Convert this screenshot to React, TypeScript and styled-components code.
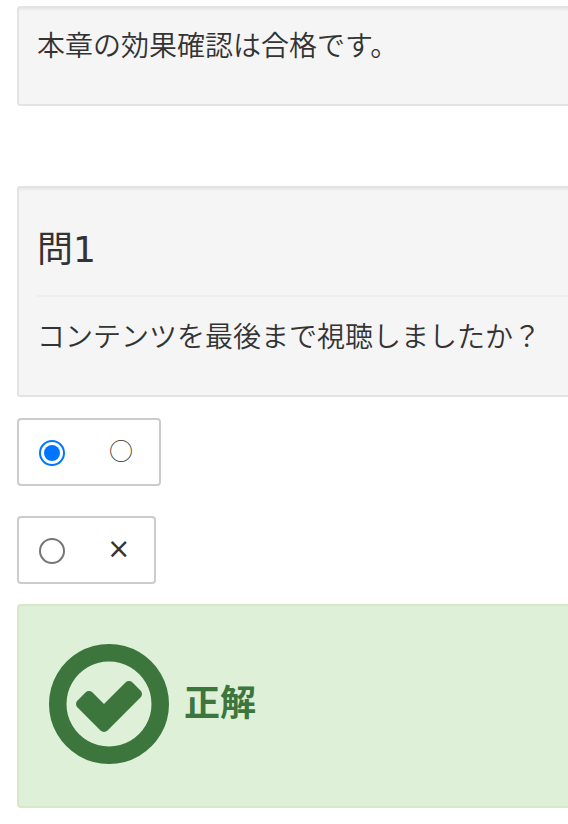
import React from "react";
import styled, { createGlobalStyle } from "styled-components";

const Global = createGlobalStyle`
  * { box-sizing: border-box; }
  body {
    margin: 0;
    background: #fff;
    color: #333;
    font-family: "Noto Sans CJK JP", sans-serif;
    font-size: 28px;
    line-height: 40px;
  }
`;
const Page = styled.main`
  display: flex;
  flex-direction: column;
  padding: 6px 0 16px 17px;
`;
const Well = styled.section<{ $gap: number }>`
  margin-bottom: ${(p) => p.$gap}px;
  padding: 16px 0 40px 18px;
  border: 2px solid #e3e3e3;
  border-right: 0;
  border-radius: 3px 0 0 3px;
  background: #f5f5f5;
  box-shadow: inset 0 3px 2px -1px rgba(0, 0, 0, 0.05);
`;
const Paragraph = styled.p`
  margin: 0;
  font-weight: 350;
`;
const Heading = styled.h1`
  margin: 24px 0 18px;
  padding-bottom: 23px;
  border-bottom: 2px solid #eee;
  font-family: "DejaVu Sans", "Noto Sans CJK JP", sans-serif;
  font-size: 36px;
  font-weight: 400;
  line-height: 44px;
`;
const Choices = styled.fieldset`
  display: flex;
  flex-direction: column;
  align-items: flex-start;
  gap: 30px;
  min-width: 0;
  margin: 0 0 20px;
  padding: 0;
  border: 0;
`;
const Choice = styled.label`
  display: flex;
  align-items: center;
  gap: 42px;
  height: 68px;
  padding: 0 24px 0 20px;
  border: 2px solid #ccc;
  border-radius: 4px;
`;
const Radio = styled.input`
  appearance: none;
  width: 26px;
  height: 26px;
  margin: 2px 0 0;
  padding: 3px;
  border: 2px solid #767676;
  border-radius: 50%;
  background: #fff;

  &:checked {
    border-color: #0075ff;
  }
  &:checked::before {
    content: "";
    display: block;
    height: 100%;
    border-radius: 50%;
    background: #0075ff;
  }
`;
const Mark = styled.span<{ $round?: boolean }>`
  width: ${(p) => (p.$round ? 28 : 23)}px;
  padding-bottom: ${(p) => (p.$round ? 4 : 2)}px;
  font-family: ${(p) => (p.$round ? '"Noto Sans CJK JP"' : '"DejaVu Sans"')}, sans-serif;
  font-size: ${(p) => (p.$round ? 24 : 28)}px;
  font-weight: ${(p) => (p.$round ? 300 : 400)};
  text-align: center;
`;
const Result = styled.section`
  display: flex;
  align-items: center;
  gap: 15px;
  padding: 38px 30px 42px;
  border: 2px solid #d6e9c6;
  border-right: 0;
  border-radius: 4px 0 0 4px;
  background: #dff0d8;
  color: #3c763d;
`;
const Verdict = styled.strong`
  padding-bottom: 8px;
  font-size: 36px;
  font-weight: 700;
`;
const CheckIcon = styled.svg`
  flex: none;
  width: 120px;
  height: 120px;
  fill: currentColor;
`;

export default function App() {
  return (
    <>
      <Global />
      <Page lang="ja">
        <Well $gap={80}>
          <Paragraph>本章の効果確認は合格です。</Paragraph>
        </Well>
        <Well $gap={21}>
          <Heading>問1</Heading>
          <Paragraph>コンテンツを最後まで視聴しましたか？</Paragraph>
        </Well>
        <Choices aria-label="問1">
          <Choice>
            <Radio type="radio" name="answer" defaultChecked />
            <Mark $round>○</Mark>
          </Choice>
          <Choice>
            <Radio type="radio" name="answer" />
            <Mark>×</Mark>
          </Choice>
        </Choices>
        <Result>
          <CheckIcon viewBox="128 128 1536 1536" aria-hidden="true">
            <path d="M1299 813l-422 422q-19 19-45 19t-45-19l-294-294q-19-19-19-45t19-45l102-102q19-19 45-19t45 19l147 147 275-275q19-19 45-19t45 19l102 102q19 19 19 45t-19 45zm141 83q0-148-73-273t-198-198-273-73-273 73-198 198-73 273 73 273 198 198 273 73 273-73 198-198 73-273zm224 0q0 209-103 385.500t-279.500 279.500-385.500 103-385.500-103-279.500-279.500-103-385.500 103-385.500 279.500-279.500 385.500-103 385.500 103 279.500 279.500 103 385.500z" />
          </CheckIcon>
          <Verdict>正解</Verdict>
        </Result>
      </Page>
    </>
  );
}
